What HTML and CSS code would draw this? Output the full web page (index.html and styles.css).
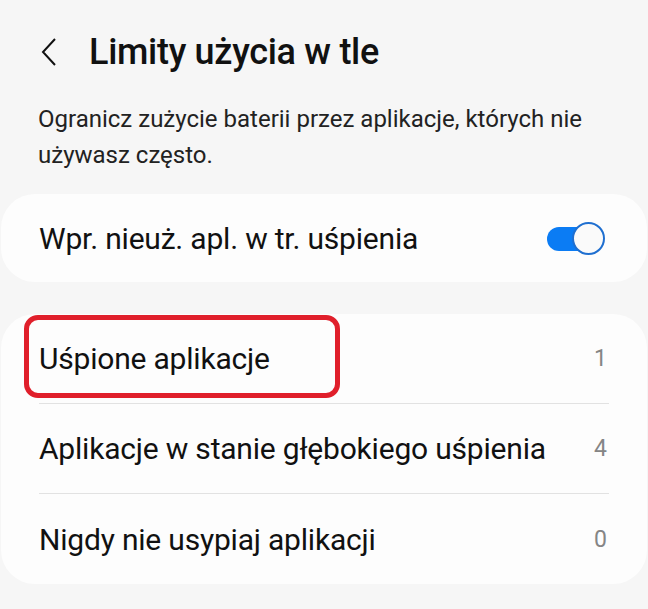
FILE: index.html
```
<!DOCTYPE html>
<html lang="pl">
<head>
    <meta charset="UTF-8">
    <meta name="viewport" content="width=device-width, initial-scale=1.0">
    <title>Limity użycia w tle</title>
    <link rel="stylesheet" href="styles.css">
</head>
<body>
    <div class="page">
        <div class="header">
            <span class="back">
                <svg width="16" height="28" viewBox="0 0 16 28">
                    <path d="M14 1 L2 14 L14 27" fill="none" stroke="#111" stroke-width="2"/>
                </svg>
            </span>
            <h1 class="title">Limity użycia w tle</h1>
        </div>
        <p class="desc">Ogranicz zużycie baterii przez aplikacje, których nie używasz często.</p>

        <div class="card switch-card">
            <span class="label">Wpr. nieuż. apl. w tr. uśpienia</span>
            <span class="toggle on"><em></em></span>
        </div>

        <div class="card list">
            <div class="row">
                <div class="row-in">
                    <span class="label">Uśpione aplikacje</span>
                    <span class="count">1</span>
                </div>
                <span class="mark"></span>
            </div>
            <div class="row">
                <div class="row-in">
                    <span class="label">Aplikacje w stanie głębokiego uśpienia</span>
                    <span class="count">4</span>
                </div>
            </div>
            <div class="row">
                <div class="row-in last">
                    <span class="label">Nigdy nie usypiaj aplikacji</span>
                    <span class="count">0</span>
                </div>
            </div>
        </div>
    </div>
</body>
</html>
```
FILE: styles.css
```
* {
    padding: 0;
    margin: 0;
    box-sizing: border-box;
}
body {
    background: #f6f6f6;
    font-family: Roboto, "Noto Sans", sans-serif;
    color: #111;
}
.page {
    width: 648px;
    height: 609px;
    overflow: hidden;
}
.header {
    display: flex;
    align-items: center;
    height: 101px;
    padding-left: 41px;
    padding-top: 3px;
}
.back {
    display: flex;
    width: 48px;
}
.title {
    font-size: 36px;
    font-weight: 500;
    letter-spacing: -0.3px;
}
.desc {
    padding: 0 38px;
    font-size: 24px;
    line-height: 36px;
    color: #222;
}
.card {
    background: #fdfdfd;
    border-radius: 34px;
    margin: 0 1px;
}
.switch-card {
    display: flex;
    align-items: center;
    justify-content: space-between;
    height: 88px;
    margin-top: 21px;
    padding: 0 42px 0 38px;
}
.label {
    font-size: 30px;
    letter-spacing: -0.2px;
}
.toggle {
    position: relative;
    width: 58px;
    height: 33px;
}
.toggle.on::before {
    content: "";
    position: absolute;
    left: 0;
    top: 5px;
    width: 46px;
    height: 24px;
    border-radius: 12px;
    background: #0b7cf4;
}
.toggle em {
    position: absolute;
    right: 0;
    top: 0;
    width: 33px;
    height: 33px;
    border-radius: 50%;
    border: 2px solid #1f6fd0;
    background: #fafafa;
}
.list {
    margin-top: 32px;
}
.row {
    position: relative;
    padding: 0 38px;
}
.row-in {
    display: flex;
    align-items: center;
    justify-content: space-between;
    height: 90px;
    border-bottom: 1px solid #e2e2e2;
}
.row-in.last {
    border-bottom: none;
}
.count {
    font-size: 23px;
    color: #858585;
    padding-right: 2px;
}
/* 红框标注 */
.mark {
    position: absolute;
    left: 23px;
    top: 1px;
    width: 316px;
    height: 83px;
    border: 5px solid #e01f2b;
    border-radius: 14px;
}
```
